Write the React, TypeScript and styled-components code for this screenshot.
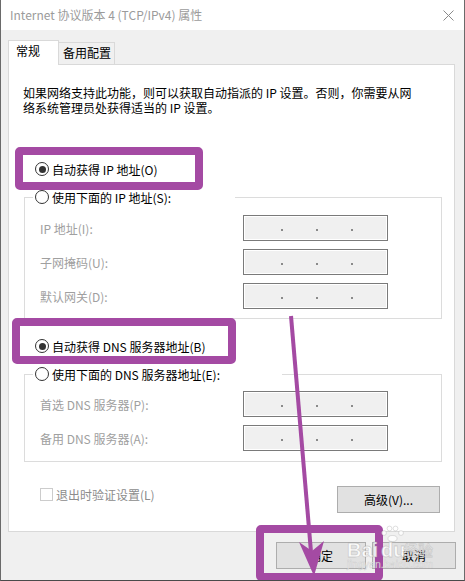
import React from "react";
import styled, { createGlobalStyle } from "styled-components";

const FONT = `"Noto Sans CJK SC", "Noto Sans", "Liberation Sans", sans-serif`;
const PURPLE = "#a44aa3";

const GlobalStyle = createGlobalStyle`
  html, body { margin: 0; padding: 0; background: #f0f0f0; }
  * { box-sizing: border-box; }
`;

const Window = styled.div`
  position: relative;
  width: 465px;
  height: 581px;
  display: flex;
  flex-direction: column;
  background: #f0f0f0;
  border-left: 1px solid #6a6a6a;
  border-right: 1px solid #6a6a6a;
  border-bottom: 1px solid #4a4a4a;
  font-family: ${FONT};
  font-size: 12px;
  color: #000;
  overflow: hidden;
`;

const TitleBar = styled.div`
  flex: none;
  height: 30px;
  background: #fff;
  display: flex;
  align-items: center;
  padding-left: 9px;
`;

const Title = styled.div`
  flex: 1;
  color: #9b9b9b;
  white-space: nowrap;
  line-height: 16px;
`;

const CloseButton = styled.div`
  width: 31px;
  height: 30px;
  display: flex;
  align-items: center;
  justify-content: center;
`;

const Body = styled.div`
  flex: 1;
  display: flex;
  flex-direction: column;
  padding: 10px 9px 0 7px;
`;

const TabStrip = styled.div`
  display: flex;
  align-items: flex-end;
  margin-bottom: -1px;
  position: relative;
  z-index: 1;
`;

const Tab = styled.div<{ $active?: boolean }>`
  width: ${(p) => (p.$active ? 51 : 56)}px;
  height: ${(p) => (p.$active ? 25 : 23)}px;
  padding: 2px 0 0 ${(p) => (p.$active ? 7 : 4)}px;
  line-height: 16px;
  background: ${(p) => (p.$active ? "#fff" : "#f0f0f0")};
  border: 1px solid #d9d9d9;
  border-bottom: ${(p) => (p.$active ? "none" : "1px solid #d9d9d9")};
  border-left: ${(p) => (p.$active ? "1px solid #d9d9d9" : "none")};
  white-space: nowrap;
`;

const Panel = styled.div`
  flex: none;
  height: 468px;
  background: #fff;
  border: 1px solid #d9d9d9;
  padding: 20px 12px 0 15px;
  display: flex;
  flex-direction: column;
`;

const Desc = styled.p`
  margin: 0 0 0 -1px;
  line-height: 15px;
  white-space: nowrap;
`;

const RadioRow = styled.div<{ $mt: number }>`
  display: flex;
  align-items: center;
  gap: 3px;
  height: 16px;
  padding-left: 11px;
  margin-top: ${(p) => p.$mt}px;
  white-space: nowrap;
`;

const Radio = styled.span<{ $checked?: boolean }>`
  flex: none;
  width: 14px;
  height: 14px;
  border: 1px solid #333;
  border-radius: 50%;
  background: #fff;
  display: flex;
  align-items: center;
  justify-content: center;
  &::after {
    content: "";
    display: ${(p) => (p.$checked ? "block" : "none")};
    width: 7px;
    height: 7px;
    border-radius: 50%;
    background: #333;
  }
`;

const Group = styled.fieldset<{ $mt: number; $pb: number }>`
  margin: ${(p) => p.$mt}px 0 0 0;
  padding: 0 0 ${(p) => p.$pb}px 0;
  border: 1px solid #dcdcdc;
  min-width: 0;
`;

const Legend = styled.legend<{ $w: number }>`
  width: ${(p) => p.$w}px;
  height: 16px;
  margin-left: 8px;
  padding: 0 0 0 2px;
  display: flex;
  align-items: center;
  gap: 3px;
  white-space: nowrap;
`;

const FieldList = styled.div<{ $mt: number }>`
  display: flex;
  flex-direction: column;
  gap: 8px;
  margin-top: ${(p) => p.$mt}px;
`;

const FieldRow = styled.div`
  display: flex;
  align-items: center;
  height: 26px;
  padding-left: 15px;
`;

const FieldLabel = styled.span`
  width: 203px;
  color: #a0a0a0;
  white-space: nowrap;
`;

const IpBox = styled.div`
  width: 145px;
  height: 26px;
  border: 1px solid #7a7a7a;
  box-shadow: inset 0 0 0 1px #fff;
  background: #f0f0f0;
  display: flex;
  align-items: center;
  gap: 33px;
  padding: 3px 0 0 37px;
`;

const IpDot = styled.span`
  width: 2px;
  height: 2px;
  background: #8a8a8a;
`;

const Footer = styled.div`
  display: flex;
  justify-content: space-between;
  align-items: flex-start;
  margin-top: 24px;
  padding: 0 2px 0 16px;
`;

const CheckRow = styled.div`
  display: flex;
  align-items: center;
  gap: 3px;
  margin-top: 1px;
  color: #8c8c8c;
  line-height: 15px;
  white-space: nowrap;
`;

const CheckBox = styled.span`
  width: 13px;
  height: 13px;
  border: 1px solid #cccccc;
  background: #fff;
`;

const PushButton = styled.button<{ $w: number }>`
  width: ${(p) => p.$w}px;
  height: 27px;
  padding: 0;
  background: #e1e1e1;
  border: 1px solid #adadad;
  font-family: ${FONT};
  font-size: 12px;
  color: #000;
  display: flex;
  align-items: center;
  justify-content: center;
  white-space: nowrap;
`;

const ButtonBar = styled.div`
  display: flex;
  justify-content: flex-end;
  gap: 6px;
  margin: 10px -1px 0 0;
`;

const Overlay = styled.svg`
  position: absolute;
  left: -1px;
  top: 0;
  width: 465px;
  height: 581px;
  pointer-events: none;
`;

const IpField = () => (
  <IpBox>
    <IpDot />
    <IpDot />
    <IpDot />
  </IpBox>
);

export default function App() {
  return (
    <>
      <GlobalStyle />
      <Window>
        <TitleBar>
          <Title>Internet 协议版本 4 (TCP/IPv4) 属性</Title>
          <CloseButton>
            <svg width="11" height="11" viewBox="0 0 11 11">
              <path d="M0.5 0.5 L10.5 10.5 M10.5 0.5 L0.5 10.5" stroke="#8a8a8a" strokeWidth="1" fill="none" />
            </svg>
          </CloseButton>
        </TitleBar>
        <Body>
          <TabStrip>
            <Tab $active>常规</Tab>
            <Tab>备用配置</Tab>
          </TabStrip>
          <Panel>
            <Desc>
              如果网络支持此功能，则可以获取自动指派的 IP 设置。否则，你需要从网
              <br />
              络系统管理员处获得适当的 IP 设置。
            </Desc>

            <RadioRow $mt={46}>
              <Radio $checked />
              <span>自动获得 IP 地址(O)</span>
            </RadioRow>

            <Group $mt={12} $pb={9}>
              <Legend $w={202}>
                <Radio />
                <span>使用下面的 IP 地址(S):</span>
              </Legend>
              <FieldList $mt={10}>
                <FieldRow>
                  <FieldLabel>IP 地址(I):</FieldLabel>
                  <IpField />
                </FieldRow>
                <FieldRow>
                  <FieldLabel>子网掩码(U):</FieldLabel>
                  <IpField />
                </FieldRow>
                <FieldRow>
                  <FieldLabel>默认网关(D):</FieldLabel>
                  <IpField />
                </FieldRow>
              </FieldList>
            </Group>

            <RadioRow $mt={19}>
              <Radio $checked />
              <span>自动获得 DNS 服务器地址(B)</span>
            </RadioRow>

            <Group $mt={12} $pb={10}>
              <Legend $w={249}>
                <Radio />
                <span>使用下面的 DNS 服务器地址(E):</span>
              </Legend>
              <FieldList $mt={9}>
                <FieldRow>
                  <FieldLabel>首选 DNS 服务器(P):</FieldLabel>
                  <IpField />
                </FieldRow>
                <FieldRow>
                  <FieldLabel>备用 DNS 服务器(A):</FieldLabel>
                  <IpField />
                </FieldRow>
              </FieldList>
            </Group>

            <Footer>
              <CheckRow>
                <CheckBox />
                <span>退出时验证设置(L)</span>
              </CheckRow>
              <PushButton $w={103}>高级(V)...</PushButton>
            </Footer>
          </Panel>
          <ButtonBar>
            <PushButton $w={90}>确定</PushButton>
            <PushButton $w={84}>取消</PushButton>
          </ButtonBar>
        </Body>

        <Overlay viewBox="0 0 465 581">
          <rect x="19" y="151" width="180" height="35" rx="1" fill="none" stroke={PURPLE} strokeWidth="8" />
          <rect x="16" y="322" width="216" height="38" rx="1" fill="none" stroke={PURPLE} strokeWidth="8" />
          <rect x="260" y="529" width="119" height="48" rx="1" fill="none" stroke={PURPLE} strokeWidth="8" />
          <line x1="291" y1="316" x2="311" y2="552" stroke={PURPLE} strokeWidth="4" />
          <polygon points="299,542 312,551 324,541 314,576" fill={PURPLE} />
          <g opacity="0.85">
            <g fill="#ffffff" stroke="#9a9a9a" strokeOpacity="0.45" strokeWidth="0.8">
              <circle cx="384" cy="533" r="2.4" />
              <circle cx="389.5" cy="528.5" r="2.4" />
              <circle cx="395.5" cy="528.5" r="2.4" />
              <circle cx="401" cy="533" r="2.4" />
              <ellipse cx="392.5" cy="538.5" rx="4.5" ry="3" />
            </g>
            <text x="347" y="557" fontFamily="Liberation Sans, sans-serif" fontWeight="bold" fontSize="20" fill="#ffffff" stroke="#9a9a9a" strokeOpacity="0.45" strokeWidth="0.8">Bai</text>
            <text x="381" y="557" fontFamily="Liberation Sans, sans-serif" fontWeight="bold" fontSize="20" fill="#ffffff" stroke="#9a9a9a" strokeOpacity="0.45" strokeWidth="0.8">du</text>
            <text x="403" y="556" fontFamily={FONT} fontSize="15" fill="#ffffff" stroke="#9a9a9a" strokeOpacity="0.45" strokeWidth="0.8">经验</text>
            <text x="347" y="568" fontFamily="Liberation Sans, sans-serif" fontSize="10.5" textLength="86" fill="#ffffff" stroke="#9a9a9a" strokeOpacity="0.4" strokeWidth="0.6">jingyan.baidu.com</text>
          </g>
        </Overlay>
      </Window>
    </>
  );
}
